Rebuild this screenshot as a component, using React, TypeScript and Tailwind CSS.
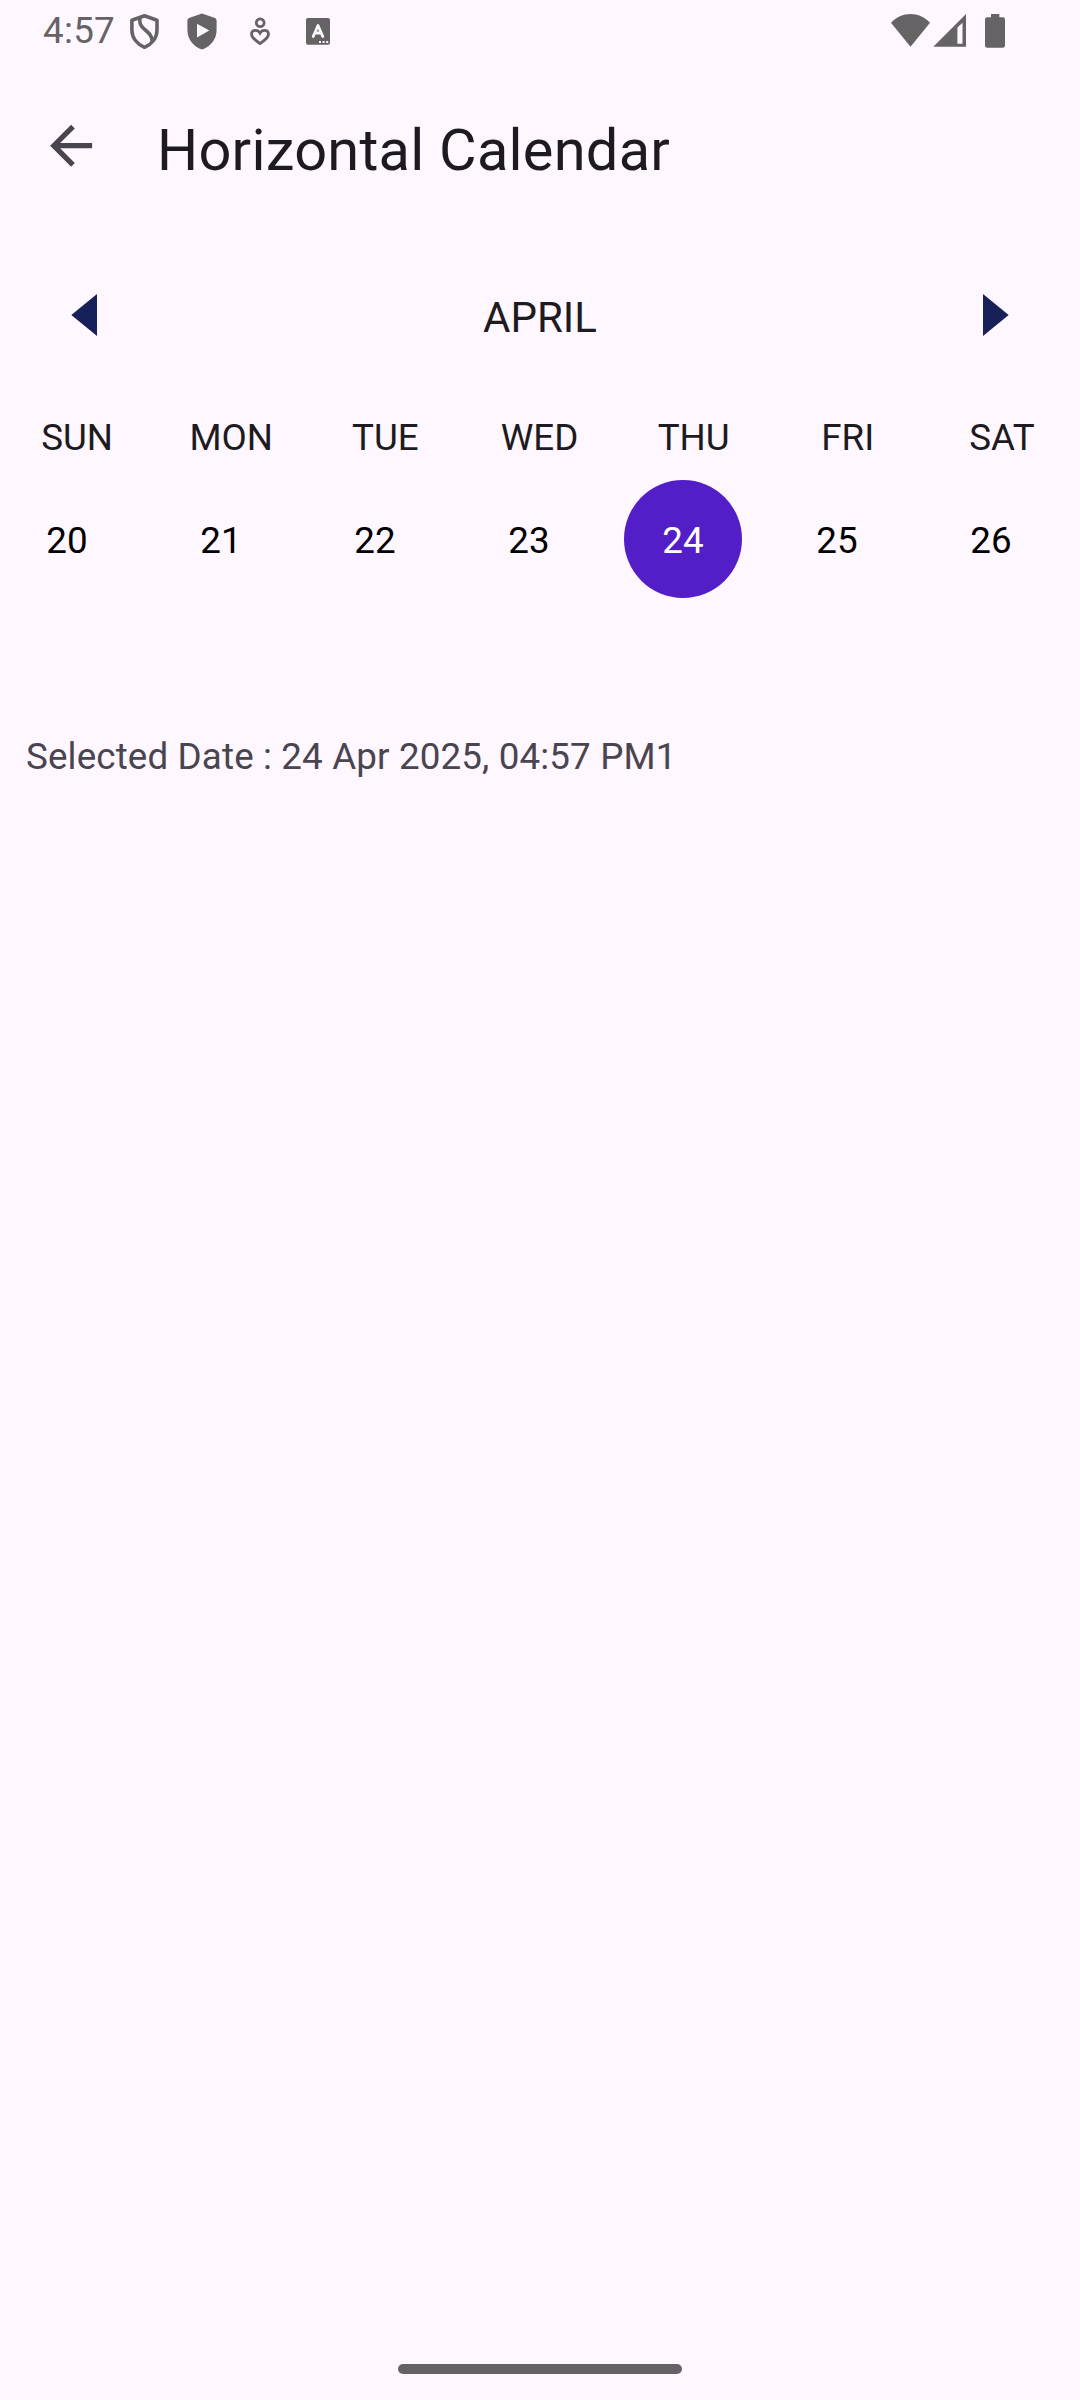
const weekdays = ["SUN", "MON", "TUE", "WED", "THU", "FRI", "SAT"];
const dates = [20, 21, 22, 23, 24, 25, 26];
const selected = 24;

function StatusBar() {
  return (
    <div className="flex h-16 items-start text-[#666366]">
      <span className="ml-[43px] mt-[9px] w-[87px] text-[36.75px] leading-[43px] tracking-[0.3px]">4:57</span>
      <svg className="mt-[13px] h-[37px] w-[30px] shrink-0" viewBox="0 0 30 37" fill="none" stroke="currentColor" strokeWidth="3.6" strokeLinejoin="round">
        <path d="M14.5 2.8L27 7.3v9.6c0 8-5.2 14.3-12.5 17.4C7.2 31.200 1.900 25 1.900 16.900V7.300z" />
        <path d="M9.800 4.500v3.500c0 9.500 12.200 9.500 12.200 19.200v1.500" />
      </svg>
      <svg className="ml-[27px] mt-[13px] h-[37px] w-[30px] shrink-0" viewBox="0 0 30 37">
        <path fill="currentColor" fillRule="evenodd" d="M15 .6L28 5.100q1.600.6 1.600 2.400V17c0 9-5.600 16.400-14.600 19.600C6 33.400.4 26 .4 17V7.500q0-1.800 1.600-2.400zM10 10.700v13.800l12.300-6.900z" />
      </svg>
      <svg className="ml-[33px] mt-[17px] h-[29px] w-5 shrink-0" viewBox="0 0 20 29" fill="none" stroke="currentColor" strokeWidth="2.800">
        <circle cx="10.200" cy="5.700" r="3.900" />
        <path d="M10 16.100C7.600 11.900 1.500 12.600 1.500 17.300c0 3.300 3.500 5.700 8.500 9.200 5-3.500 8.500-5.900 8.500-9.200 0-4.700-6.100-5.400-8.500-1.200z" />
      </svg>
      <svg className="ml-9 mt-[18px] h-[27px] w-6 shrink-0" viewBox="0 0 24 27">
        <rect width="24" height="26.700" rx="2" fill="currentColor" />
        <path d="M7.200 18.500L12 7.500l4.800 11M9 15h6" fill="none" stroke="#fef7ff" strokeWidth="2.800" strokeLinecap="round" strokeLinejoin="round" />
        <path d="M13 23h2v2h-2zM16.600 23h2v2h-2zM20.200 23h2v2h-2z" fill="#fef7ff" />
      </svg>
      <svg className="ml-auto mt-[14px] h-[33px] w-[39px] shrink-0" viewBox="0 0 39 33" fill="currentColor">
        <path d="M0 8.700C5.400 3 12 0 19.500 0S33.600 3 39 8.700L19.500 32.700z" />
      </svg>
      <svg className="ml-[3px] mt-[14px] h-[33px] w-[33px] shrink-0" viewBox="0 0 33 33" fill="currentColor">
        <path fillRule="evenodd" d="M33 0v32.700H.3zM29.500 8.700L24.400 13.500v16.200h5.100z" />
      </svg>
      <svg className="ml-[19px] mr-[75px] mt-[14px] h-[34px] w-5 shrink-0" viewBox="0 0 20 34" fill="currentColor">
        <path d="M6 0h8.300v3.300h3.500q2.200 0 2.200 2.200v26q0 2.200-2.200 2.200H2.200Q0 33.700 0 31.500v-26q0-2.200 2.200-2.200H6z" />
      </svg>
    </div>
  );
}

export default function App() {
  return (
    <div className="flex h-[2400px] w-[1080px] flex-col overflow-hidden bg-[#fef7ff] font-['Roboto',sans-serif] text-[#1d1b20]">
      <StatusBar />
      <header className="flex h-[168px] items-start">
        <svg className="ml-10 mt-[50px] h-[63px] w-[63px]" viewBox="0 0 24 24" fill="#49454f">
          <path d="M19.850 11.080H7.680l5.590-5.590L11.850 4.080l-8 8 8 8 1.410-1.410L7.680 13.080h12.170v-2z" />
        </svg>
        <h1 className="ml-[54px] mt-[52px] text-[57.75px] leading-[68px] tracking-[0.24px]">Horizontal Calendar</h1>
      </header>
      <div className="flex h-[168px] items-start justify-between px-[71px] pt-[61px]">
        <svg className="mt-px h-[42px] w-[26px]" viewBox="0 0 26 42" fill="#18205a">
          <path d="M26 0v42L.3 21z" />
        </svg>
        <span className="text-[42px] leading-[49px]">APRIL</span>
        <svg className="mt-px h-[42px] w-[26px]" viewBox="0 0 26 42" fill="#18205a">
          <path d="M0 0v42l25.700-21z" />
        </svg>
      </div>
      <div className="grid h-20 w-[1079px] grid-cols-7 pt-4 text-center text-[36.75px] leading-[43px]">
        {weekdays.map((day) => (
          <span key={day}>{day}</span>
        ))}
      </div>
      <div className="flex gap-9 pl-2 text-[36.75px] text-black">
        {dates.map((date) => (
          <button
            key={date}
            className={
              date === selected
                ? "flex size-[118px] shrink-0 items-center justify-center rounded-full bg-[#531dc8] pt-1 text-white"
                : "flex size-[118px] shrink-0 items-center justify-center rounded-full pt-1"
            }
          >
            {date}
          </button>
        ))}
      </div>
      <p className="ml-[26px] mt-[137px] text-[36.75px] leading-[43px] tracking-[0.14px] text-[#49454f]">
        Selected Date : 24 Apr 2025, 04:57 PM1
      </p>
      <div className="mx-auto mb-[26px] mt-auto h-[10px] w-[284px] rounded-full bg-[#666366]" />
    </div>
  );
}
